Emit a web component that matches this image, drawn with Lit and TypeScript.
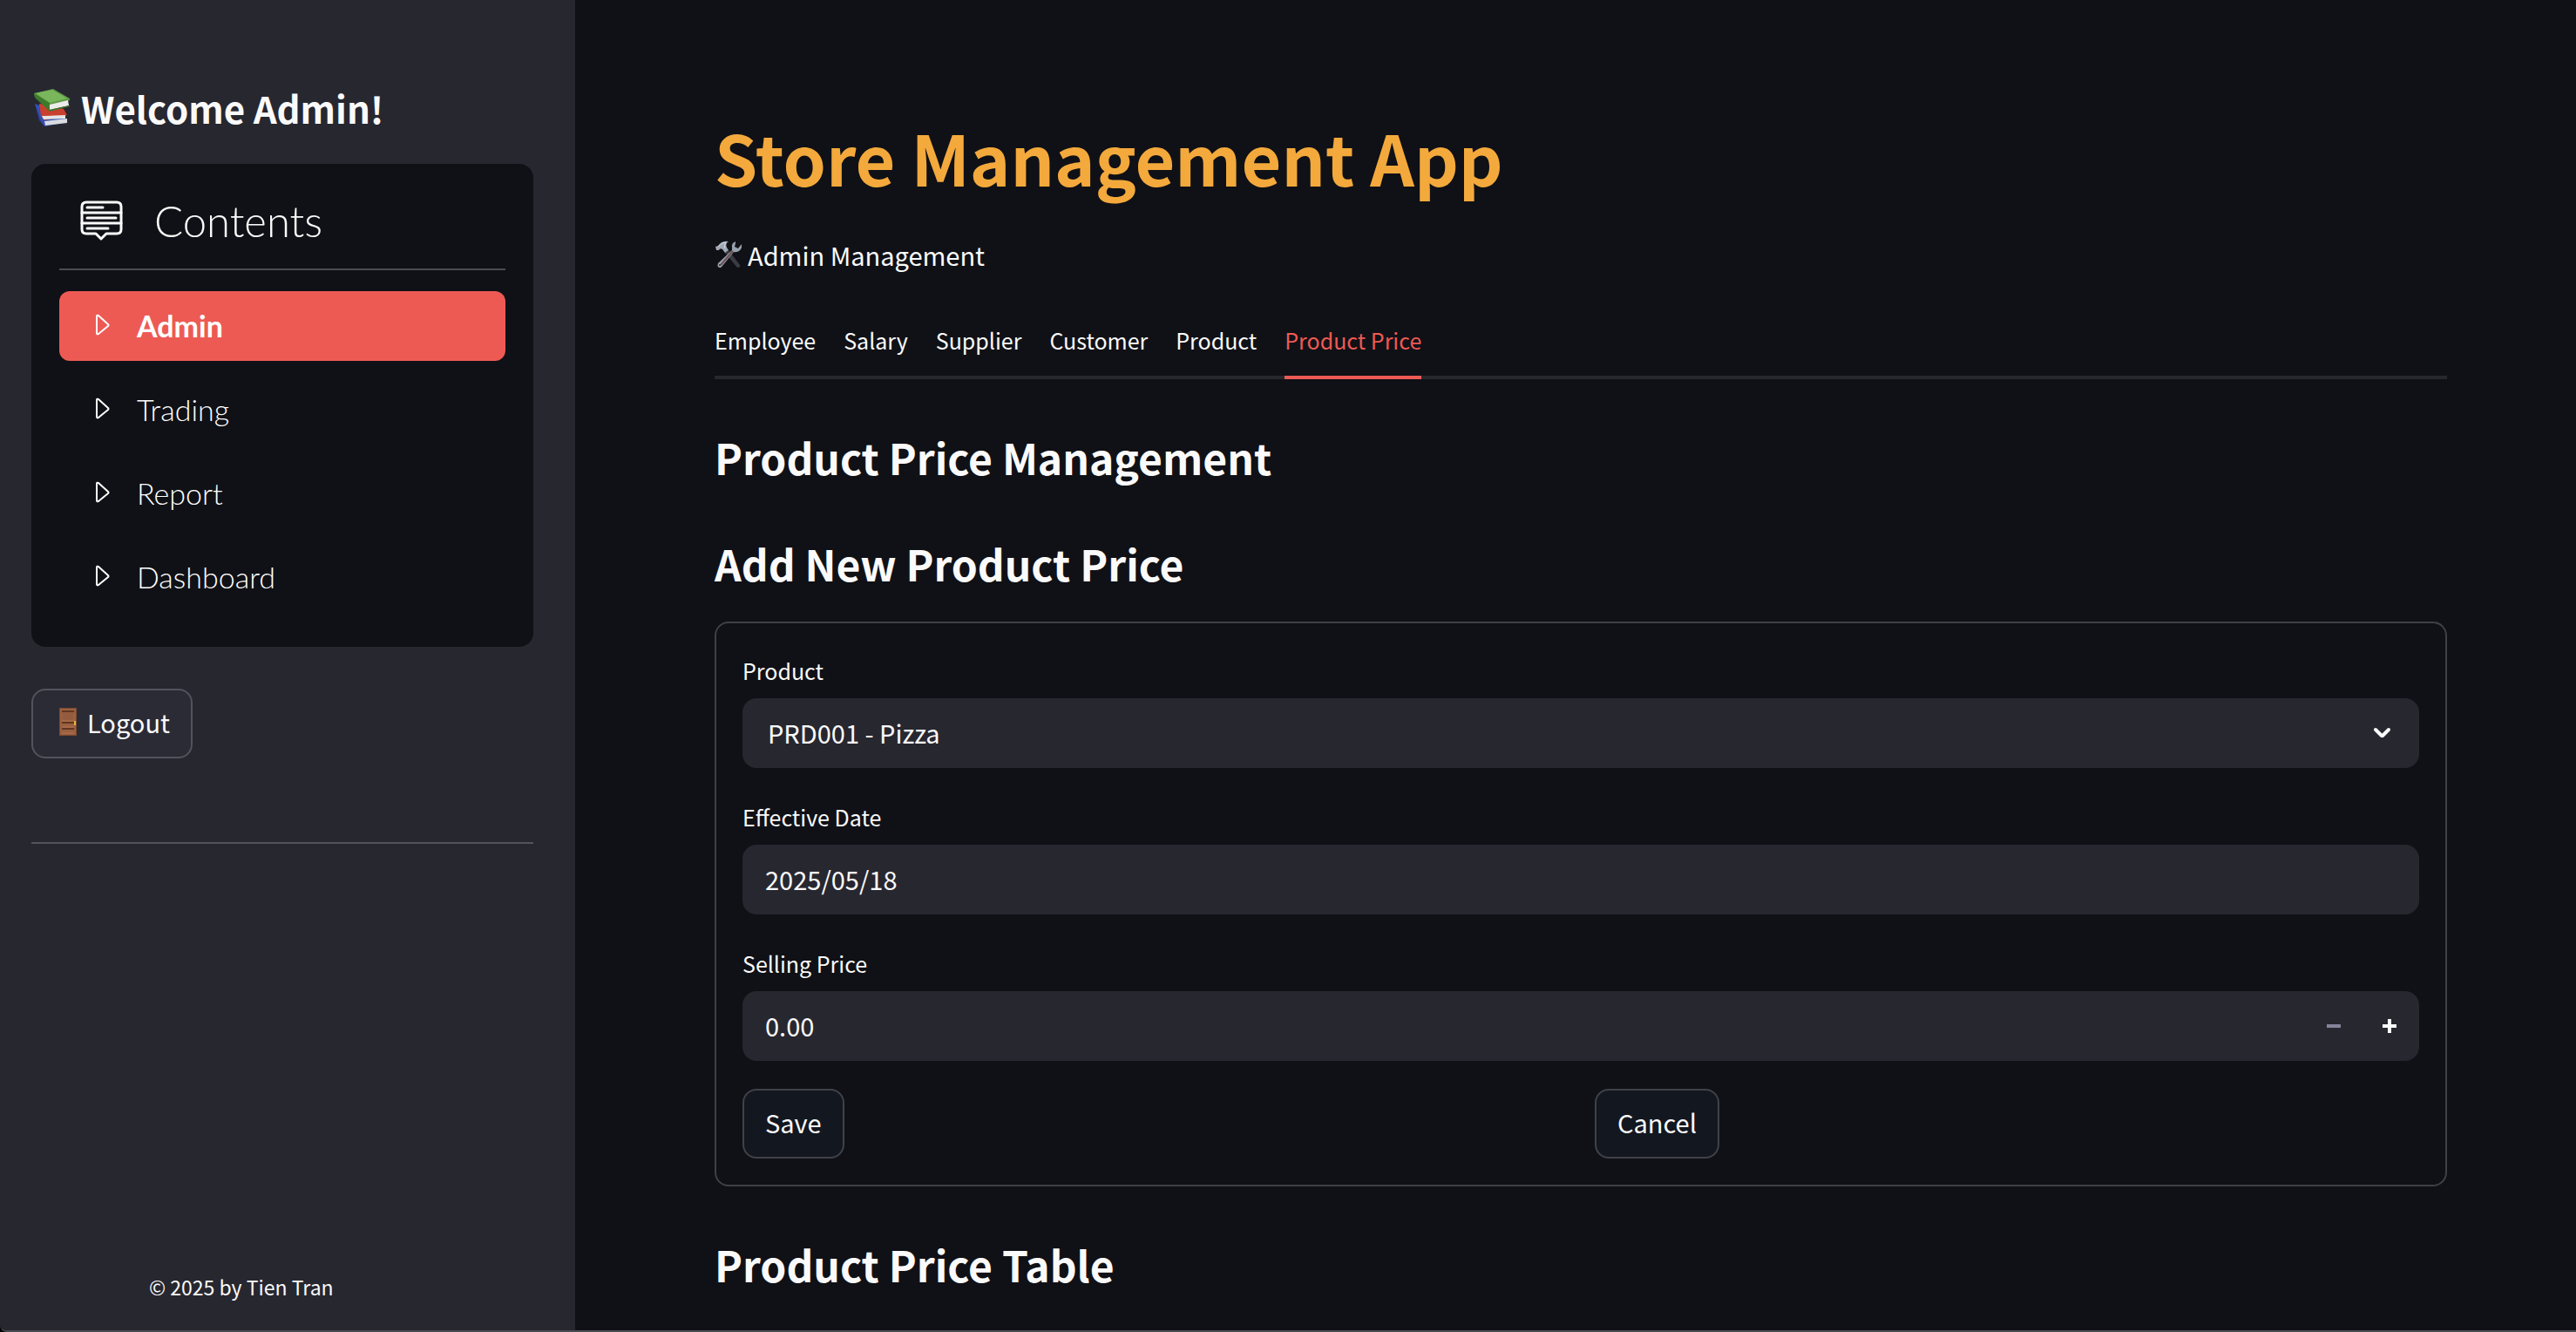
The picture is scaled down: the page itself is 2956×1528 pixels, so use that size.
import { LitElement, html, svg, css } from "lit";
import { customElement, state } from "lit/decorators.js";

const booksIcon = html`<svg class="emoji books" viewBox="0 0 42 44" aria-hidden="true">
  <path d="M1 17 L7 23 L12 43 L6 36 Z" fill="#2b3f9a"/>
  <path d="M1 17 L26 26 L39 38 L12 43 L8 36 Z" fill="#3350b4"/>
  <path d="M12 37 L38 34 L38 39 L13 42 Z" fill="#d9dbe0"/>
  <path d="M6 17 L34 23 L38 30 L12 36 L8 31 Z" fill="#cc3a2b"/>
  <path d="M9 31 L36 30 L36 34 L11 35 Z" fill="#e4e4e4"/>
  <path d="M6 17 L9 31 L36 29 L34 23 Z" fill="#c9402f"/>
  <path d="M0 5 L22 0 L41 11 L41 13 L18 20 L1 9 Z" fill="#5f9b45"/>
  <path d="M2 5 L21 1 L38 11 L18 16 Z" fill="#7ab65b"/>
  <path d="M0 5 L18 16 L17 25 L1 10 Z" fill="#3d7a2c"/>
  <path d="M18 18 L39 13 L40 19 L18 24 Z" fill="#ececea"/>
  <path d="M17 24 L41 19 L41 20 L18 26 Z" fill="#3d7a2c"/>
</svg>`;

const toolsIcon = html`<svg class="emoji tools" viewBox="0 0 32 32" aria-hidden="true">
  <path d="M12 14 L16 11 L29 28 Q30 31 26 31 Z" fill="#3a3c43"/>
  <path d="M2 11 L1 7 L4 6 Q8 0 16 1 Q12 3 14 8 L16 11 L12 14 L9 10 Q6 8 5 11 Z" fill="#9fa8b5"/>
  <path d="M4 7 Q8 2 13 2 Q10 5 12 9" fill="none" stroke="#d3dae3"/>
  <path d="M24 1 Q19 3 20 8 L20 11 L4 26 Q2 31 7 31 L9 29 L22 13 Q29 14 31 8 L31 4 L27 9 L23 7 L24 3 Z" fill="#98a0ad"/>
  <path d="M21 12 L7 28" stroke="#6b4e50" stroke-width="2"/>
  <circle cx="6" cy="28" r="1" fill="#202127"/>
</svg>`;

const doorIcon = html`<svg class="emoji door" viewBox="0 0 20 32" aria-hidden="true">
  <rect width="20" height="32" fill="#7c4930"/>
  <rect x="1" y="1" width="18" height="30" fill="#9a6040"/>
  <path d="M3 4H17M3 17H17M3 24H17" stroke="#613621" stroke-width="2"/>
  <rect x="4" y="5" width="12" height="10" fill="#945c3e"/>
  <path d="M3 15H17M3 22H17M3 29H17" stroke="#b4734f"/>
  <rect x="17" y="15" width="2" height="5" fill="#e3b83d"/>
</svg>`;

const contentsIcon = html`<svg class="contents-icon" viewBox="0 -1 50 48" fill="none" stroke="currentColor" stroke-width="3" stroke-linecap="round" stroke-linejoin="round" aria-hidden="true">
  <path d="M7 2H42Q47 2 47 7V33Q47 38 42 38H30L24 44L18 38H7Q2 38 2 33V7Q2 2 7 2"/>
  <path d="M2 14H47M2 26H47M8 8H26M8 20H41M8 32H32"/>
</svg>`;

const caretIcon = html`<svg class="caret" viewBox="0 0 32 32" fill="none" stroke="currentColor" stroke-width="2" stroke-linejoin="round" aria-hidden="true">
  <path d="M10 6V25Q10 27 12 26L23 17Q24 16 23 15L12 5Q10 4 10 6Z"/>
</svg>`;

const MENU = ["Admin", "Trading", "Report", "Dashboard"];
const TABS = ["Employee", "Salary", "Supplier", "Customer", "Product", "Product Price"];

@customElement("app-root")
export class AppRoot extends LitElement {
  @state() private page = "Admin";
  @state() private tab = "Product Price";
  @state() private price = 0;

  static styles = css`
    :host {
      display: block;
      background: #000;
      color: #fafafa;
      font-family: "Noto Sans CJK SC", "Noto Sans", sans-serif;
      font-size: 29px;
    }
    * { box-sizing: border-box; }
    h1, h2, p { margin: 0; }
    button, input, select { font: inherit; color: inherit; margin: 0; }
    button { cursor: pointer; }
    .window {
      display: flex;
      height: 100vh;
      overflow: hidden;
      background: #101116;
      border-bottom: 2px solid #4b4c51;
      border-bottom-left-radius: 8px;
    }
    .sidebar {
      flex: 0 0 660px;
      display: flex;
      flex-direction: column;
      padding: 94px 48px 26px 36px;
      background: #272730;
    }
    .emoji { flex: none; }
    .books { width: 42px; height: 44px; }
    .tools { width: 32px; height: 32px; }
    .door { width: 20px; height: 32px; }
    .welcome {
      display: flex;
      align-items: center;
      gap: 12px;
      padding-left: 3px;
      height: 60px;
      font-size: 42px;
      line-height: 60px;
      font-weight: 700;
    }
    .menu {
      margin-top: 34px;
      padding: 32px 32px 40px;
      border-radius: 16px;
      background: #101116;
      font-family: Lato, "Open Sans", sans-serif;
      font-weight: 300;
    }
    .menu-title {
      display: flex;
      align-items: center;
      gap: 35px;
      height: 90px;
      padding: 0 24px 22px;
      border-bottom: 2px solid #4b4c50;
      font-size: 49px;
    }
    .contents-icon { width: 50px; height: 48px; }
    .menu-list {
      display: flex;
      flex-direction: column;
      gap: 16px;
      margin: 24px 0 0;
      padding: 0;
      list-style: none;
    }
    .menu-link {
      display: flex;
      align-items: center;
      gap: 24px;
      height: 80px;
      padding: 0 0 2px 33px;
      border-radius: 12px;
      color: #fff;
      font-size: 34px;
      text-decoration: none;
    }
    .menu-link.active { background: #ed5a54; font-weight: 700; }
    .caret { width: 32px; height: 32px; }
    .button {
      height: 80px;
      padding: 0 24px 4px;
      border: 2px solid #414249;
      border-radius: 16px;
      background: #131720;
    }
    .logout {
      display: flex;
      align-items: center;
      gap: 12px;
      align-self: flex-start;
      margin-top: 48px;
      padding-left: 30px;
      border-color: #52535c;
      background: #2b2b35;
    }
    .rule { width: 100%; margin: 96px 0 0; border: 0; border-top: 2px solid #52535c; }
    .copyright { margin-top: auto; padding-left: 135px; font-size: 23px; line-height: 48px; }
    .main { flex: 1; min-width: 0; padding: 122px 148px 0 160px; }
    .title { color: #f3a93c; font-size: 79px; line-height: 116px; font-weight: 700; }
    .subtitle { display: flex; align-items: center; gap: 6px; margin-top: 30px; line-height: 48px; }
    .tabs {
      display: flex;
      gap: 32px;
      margin-top: 36px;
      border-bottom: 4px solid #27282e;
    }
    .tab {
      height: 83px;
      margin-bottom: -4px;
      padding: 0 0 4px;
      border: 0;
      border-bottom: 4px solid transparent;
      background: none;
      font-size: 25px;
    }
    .tab.active { color: #ed5a54; border-color: #ed5a54; }
    .heading { font-size: 48px; line-height: 74px; font-weight: 700; }
    .tabs + .heading { margin-top: 52px; }
    .heading + .heading { margin-top: 48px; }
    .form {
      display: flex;
      flex-direction: column;
      gap: 32px;
      margin-top: 30px;
      padding: 30px;
      border: 2px solid #3f4045;
      border-radius: 16px;
    }
    .field { display: flex; flex-direction: column; gap: 8px; }
    .label { font-size: 25px; line-height: 48px; }
    .control {
      display: flex;
      align-items: center;
      height: 80px;
      border-radius: 16px;
      background: #272730;
    }
    .input {
      flex: 1;
      min-width: 0;
      height: 80px;
      padding: 0 26px 2px;
      border: 0;
      outline: 0;
      background: none;
      appearance: none;
    }
    .select { padding-left: 29px; }
    .chevron { flex: none; width: 48px; height: 32px; margin: 0 20px 0 -68px; pointer-events: none; }
    .step {
      display: grid;
      place-items: center;
      width: 64px;
      height: 80px;
      padding: 0;
      border: 0;
      background: none;
    }
    .step:disabled { color: #83849a; }
    .step:last-child { margin-right: 2px; }
    .sign { width: 16px; height: 16px; fill: currentColor; }
    .actions { display: grid; grid-template-columns: 1fr 1fr; gap: 32px; justify-items: start; }
    .form + .heading { margin-top: 52px; }
  `;

  private go(event: Event, name: string) {
    event.preventDefault();
    this.page = name;
  }

  private setPrice(event: Event) {
    this.price = Math.max(0, Number((event.target as HTMLInputElement).value) || 0);
  }

  render() {
    return html`<div class="window">
      <aside class="sidebar">
        <h2 class="welcome">${booksIcon}Welcome Admin!</h2>
        <nav class="menu" aria-label="Contents">
          <div class="menu-title">${contentsIcon}Contents</div>
          <ul class="menu-list">
            ${MENU.map((name) => html`<li>
              <a class="menu-link ${name === this.page ? "active" : ""}" href="#${name.toLowerCase()}"
                @click=${(e: Event) => this.go(e, name)}>${caretIcon}${name}</a>
            </li>`)}
          </ul>
        </nav>
        <button class="button logout" type="button">${doorIcon}Logout</button>
        <hr class="rule">
        <p class="copyright">© 2025 by Tien Tran</p>
      </aside>
      <main class="main">
        <h1 class="title">Store Management App</h1>
        <p class="subtitle">${toolsIcon}Admin Management</p>
        <div class="tabs" role="tablist">
          ${TABS.map((name) => html`<button type="button" role="tab" aria-selected=${name === this.tab ? "true" : "false"}
            class="tab ${name === this.tab ? "active" : ""}" @click=${() => (this.tab = name)}>${name}</button>`)}
        </div>
        <h2 class="heading">Product Price Management</h2>
        <h2 class="heading">Add New Product Price</h2>
        <form class="form" @submit=${(e: Event) => e.preventDefault()}>
          <div class="field">
            <label class="label" for="product">Product</label>
            <div class="control">
              <select class="input select" id="product"><option>PRD001 - Pizza</option></select>
              <svg class="chevron" viewBox="0 0 48 32" fill="none" stroke="currentColor" stroke-width="4" stroke-linecap="round" stroke-linejoin="round" aria-hidden="true"><path d="M18 12L25 19L26 19L33 12" /></svg>
            </div>
          </div>
          <div class="field">
            <label class="label" for="date">Effective Date</label>
            <div class="control"><input class="input" id="date" type="text" value="2025/05/18"></div>
          </div>
          <div class="field">
            <label class="label" for="price">Selling Price</label>
            <div class="control">
              <input class="input" id="price" type="text" inputmode="decimal" .value=${this.price.toFixed(2)} @change=${this.setPrice}>
              <button class="step" type="button" aria-label="Decrease" ?disabled=${this.price <= 0}
                @click=${() => (this.price = Math.max(0, this.price - 1))}>
                <svg class="sign" viewBox="0 0 16 16">${svg`<path d="M0 6H16V10H0Z"/>`}</svg>
              </button>
              <button class="step" type="button" aria-label="Increase" @click=${() => (this.price += 1)}>
                <svg class="sign" viewBox="0 0 16 16">${svg`<path d="M6 0H10V6H16V10H10V16H6V10H0V6H6Z"/>`}</svg>
              </button>
            </div>
          </div>
          <div class="actions">
            <button class="button" type="submit">Save</button>
            <button class="button" type="reset">Cancel</button>
          </div>
        </form>
        <h2 class="heading">Product Price Table</h2>
      </main>
    </div>`;
  }
}
